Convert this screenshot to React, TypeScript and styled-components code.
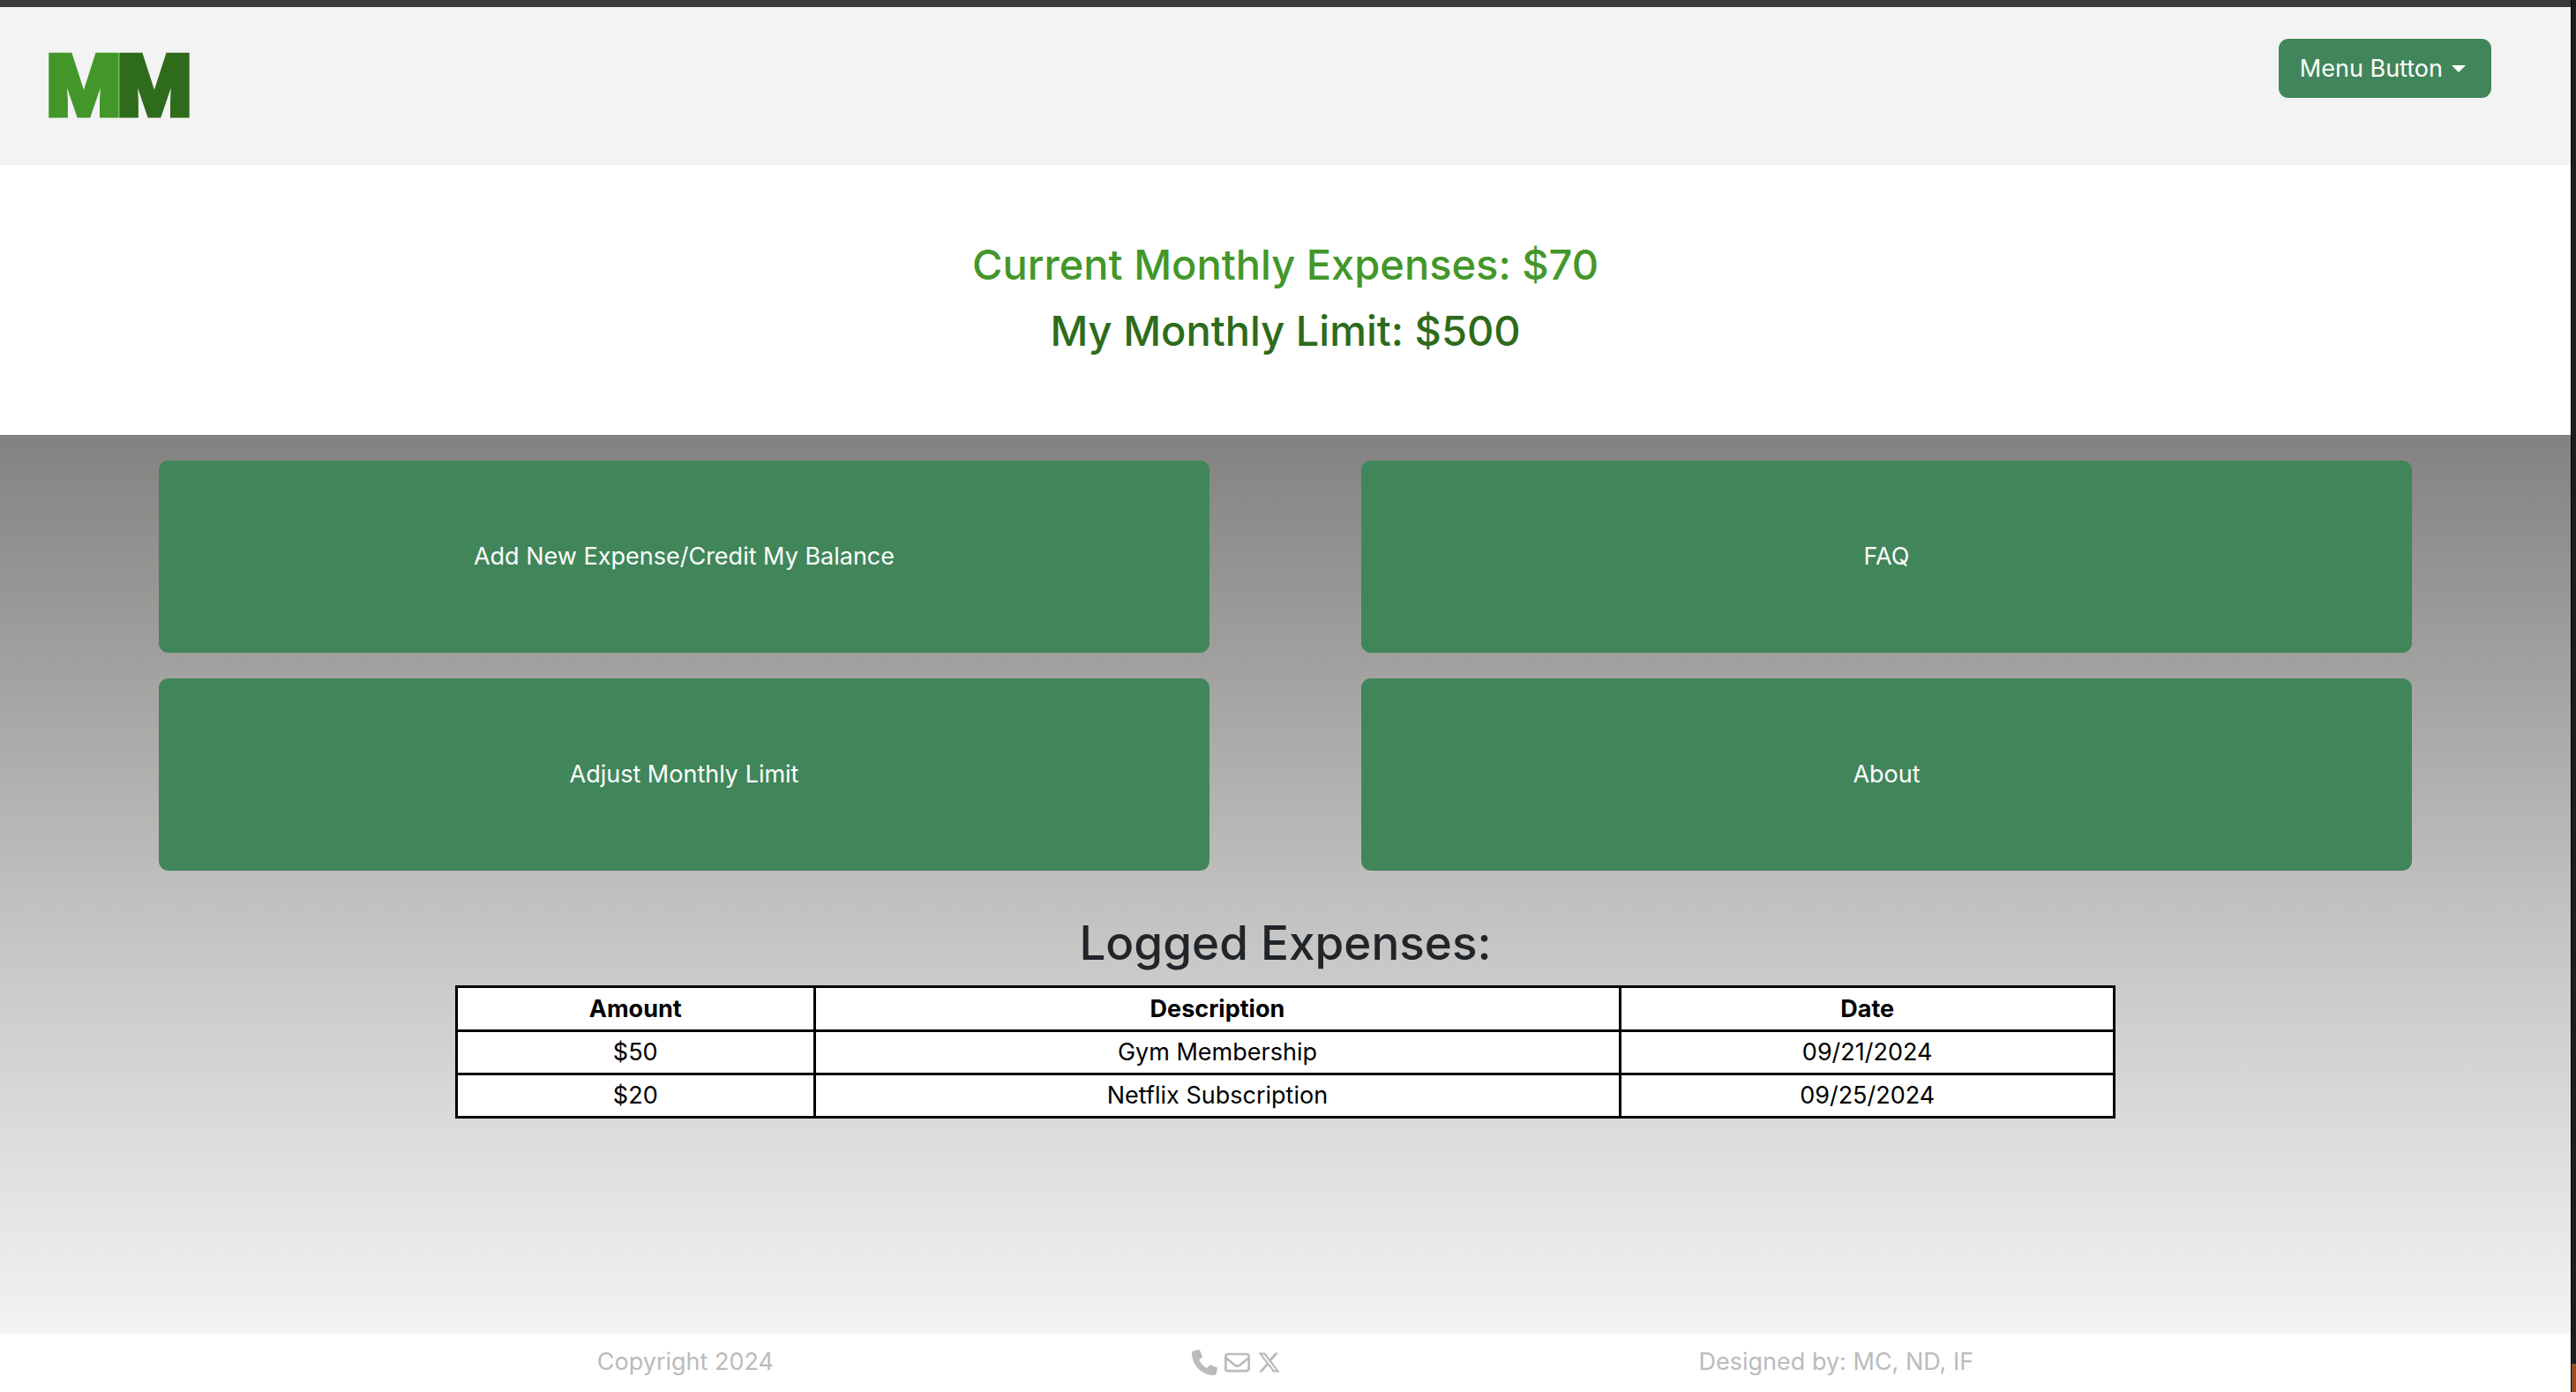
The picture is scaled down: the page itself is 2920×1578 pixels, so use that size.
import React from "react";
import styled, { createGlobalStyle } from "styled-components";
import { FaPhone, FaRegEnvelope, FaXTwitter } from "react-icons/fa6";

const GlobalStyle = createGlobalStyle`
  *, *::before, *::after { box-sizing: border-box; }
  body {
    margin: 0;
    background: #ffffff;
    color: #212529;
    font-family: Inter, "Liberation Sans", sans-serif;
    font-size: 27px;
    line-height: 42px;
  }
`;

const Window = styled.div`
  display: flex;
  min-height: 100vh;
`;

const Page = styled.div`
  display: flex;
  flex-direction: column;
  flex: 1;
  min-width: 0;
  border-top: 8px solid #3c3c3c;
`;

const Desktop = styled.div`
  width: 6px;
  border-left: 1px solid #000000;
  background: linear-gradient(to top, #95501f 32px, #1b1d21 32px);
`;

const Header = styled.header`
  display: flex;
  justify-content: space-between;
  align-items: flex-start;
  padding: 36px 90px 36px 55px;
  min-height: 179px;
  background: #f3f3f3;
`;

const Logo = styled.a`
  display: flex;
  margin-top: 8px;
  font-family: Roboto, sans-serif;
  font-size: 97px;
  font-weight: 900;
  line-height: 92px;
  text-decoration: none;
`;

const LogoLetter = styled.span<{ $color: string }>`
  display: flex;
  justify-content: center;
  width: 80px;
  color: ${(p) => p.$color};
  -webkit-text-stroke: 5px ${(p) => p.$color};
`;

const Button = styled.button`
  border: 0;
  border-radius: 11px;
  background: #41865a;
  color: #ffffff;
  font: inherit;
  cursor: pointer;
`;

const MenuButton = styled(Button)`
  display: flex;
  align-items: center;
  gap: 10px;
  height: 67px;
  padding: 0 29px 0 24px;
`;

const Caret = styled.span`
  border-top: 8px solid #ffffff;
  border-left: 8px solid transparent;
  border-right: 8px solid transparent;
`;

const Summary = styled.section`
  display: flex;
  flex-direction: column;
  align-items: center;
  gap: 14px;
  padding: 82px 24px 88px;
`;

const Total = styled.h3<{ $color: string }>`
  margin: 0;
  color: ${(p) => p.$color};
  font-size: 47px;
  font-weight: 500;
  line-height: 61px;
`;

const Main = styled.main`
  flex: 1;
  padding: 29px 0;
  background: linear-gradient(#838280, #c4c4c2 55%, #f3f3f3);
`;

const Actions = styled.nav`
  display: grid;
  grid-template-columns: 1fr 1fr;
  gap: 29px 172px;
  padding: 0 180px;
`;

const ActionButton = styled(Button)`
  height: 218px;
`;

const Title = styled.h2`
  margin: 48px 0 14px;
  font-size: 53px;
  font-weight: 500;
  line-height: 68px;
  text-align: center;
`;

const Table = styled.table`
  width: 64.6%;
  margin: 0 auto;
  border-collapse: collapse;
  table-layout: fixed;
  background: #ffffff;
  color: #000000;
  text-align: center;
`;

const HeadCell = styled.th<{ $width?: string }>`
  width: ${(p) => p.$width ?? "auto"};
  padding: 0;
  border: 3px solid #000000;
  font-weight: 700;
  line-height: 47px;
`;

const Cell = styled.td`
  padding: 0;
  border: 3px solid #000000;
  line-height: 46px;
`;

const Footer = styled.footer`
  display: flex;
  justify-content: space-evenly;
  padding: 11px 203px 13px;
  background: #ffffff;
  color: #bbbbbb;
`;

const Contacts = styled.div`
  display: flex;
  align-items: center;
  gap: 8px;
`;

const ContactLink = styled.a`
  display: flex;
  color: inherit;
`;

const actions = ["Add New Expense/Credit My Balance", "FAQ", "Adjust Monthly Limit", "About"];

const expenses = [
  { amount: "$50", description: "Gym Membership", date: "09/21/2024" },
  { amount: "$20", description: "Netflix Subscription", date: "09/25/2024" },
];

export default function App() {
  return (
    <Window>
      <GlobalStyle />
      <Page>
        <Header>
          <Logo href="#">
            <LogoLetter $color="#43972a">M</LogoLetter>
            <LogoLetter $color="#2e6b1b">M</LogoLetter>
          </Logo>
          <MenuButton type="button">
            Menu Button
            <Caret />
          </MenuButton>
        </Header>
        <Summary>
          <Total $color="#43972a">Current Monthly Expenses: $70</Total>
          <Total $color="#2e6b1b">My Monthly Limit: $500</Total>
        </Summary>
        <Main>
          <Actions>
            {actions.map((label) => (
              <ActionButton type="button" key={label}>{label}</ActionButton>
            ))}
          </Actions>
          <Title>Logged Expenses:</Title>
          <Table>
            <thead>
              <tr>
                <HeadCell scope="col" $width="21.6%">Amount</HeadCell>
                <HeadCell scope="col" $width="48.6%">Description</HeadCell>
                <HeadCell scope="col">Date</HeadCell>
              </tr>
            </thead>
            <tbody>
              {expenses.map((e) => (
                <tr key={e.date}>
                  <Cell>{e.amount}</Cell>
                  <Cell>{e.description}</Cell>
                  <Cell>{e.date}</Cell>
                </tr>
              ))}
            </tbody>
          </Table>
        </Main>
        <Footer>
          <span>Copyright 2024</span>
          <Contacts>
            <ContactLink href="#" aria-label="Phone"><FaPhone size={29} /></ContactLink>
            <ContactLink href="#" aria-label="Email"><FaRegEnvelope size={29} /></ContactLink>
            <ContactLink href="#" aria-label="X"><FaXTwitter size={27} /></ContactLink>
          </Contacts>
          <span>Designed by: MC, ND, IF</span>
        </Footer>
      </Page>
      <Desktop />
    </Window>
  );
}
